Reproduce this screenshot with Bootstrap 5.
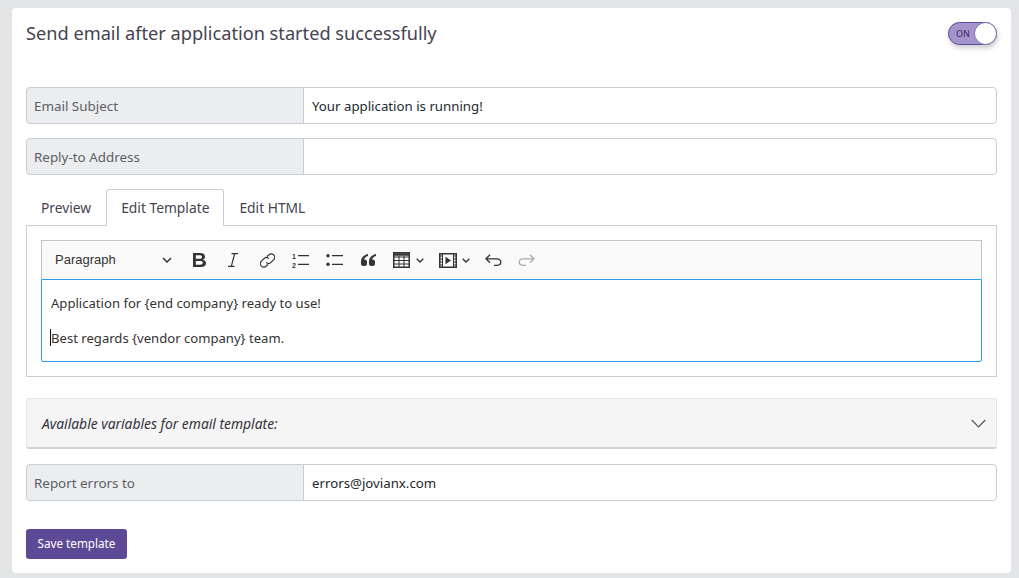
<!DOCTYPE html>
<html lang="en">
<head>
    <meta charset="UTF-8">
    <meta name="viewport" content="width=device-width, initial-scale=1.0">
    <title>Email Template</title>
    <link href="https://cdn.jsdelivr.net/npm/bootstrap@5.3.0/dist/css/bootstrap.min.css" rel="stylesheet">
    <style>
        html, body { height: 578px; overflow: hidden; }
        body {
            background: #e4e5e6;
            font-family: "Noto Sans", sans-serif;
            font-size: 13.3px;
            color: #212529;
            padding: 8px 8px 0 12px;
        }
        .panel {
            height: 565px;
            background: #fff;
            border: 0;
            border-radius: 4px;
            padding: 12px 14px 0;
        }
        .panel-title { font-size: 18.2px; font-weight: 400; color: #45434f; line-height: 26px; margin: 0; }
        .panel-head { height: 67px; }
        .switch-box {
            width: 49px; height: 23px; margin: 2px 0 0; border: 1px solid #5c4a97;
            border-radius: 12px; background: #a594cc; position: relative;
            box-shadow: 1px 3px 5px rgba(0,0,0,.2);
            font-size: 9px; line-height: 21px; color: #2f2a6a; padding-left: 7px;
        }
        .switch-knob {
            position: absolute; right: -1px; top: -1px; width: 23px; height: 23px;
            background: #fff; border: 1px solid #7f6fb0; border-radius: 50%;
        }
        .field-row { height: 37px; margin-bottom: 14px; flex-wrap: nowrap; }
        .field-row .input-group-text {
            width: 278px; font-size: 13.4px; color: #5c5f66; background: #ecedef;
            border-color: #c8ced3; padding: 1px 7px 0; border-radius: 4px 0 0 4px;
        }
        .field-row .form-control {
            font-size: 13.25px; color: #23282c; border-color: #c8ced3; padding: 0 8px; height: 37px;
            border-radius: 0 4px 4px 0;
        }
        .nav-tabs { border-bottom: 0; height: 37px; margin-bottom: -1px; position: relative; z-index: 1; }
        .nav-tabs .nav-link {
            font-size: 13.8px; color: #45434f; padding: 0 14px; height: 37px; line-height: 36px;
            border-radius: 3px 3px 0 0; border: 1px solid transparent; margin: 0;
        }
        .nav-tabs .nav-link.active { border-color: #c8ced3 #c8ced3 #fff; color: #45434f; }
        .tab-box { border: 1px solid #c8ced3; height: 152px; padding: 14px; }
        .editor-bar {
            height: 39px; background: #fafafa; border: 1px solid #c4c4c4; border-bottom: 0;
            padding-left: 13px; color: #333;
        }
        .style-pick { font-family: "Liberation Sans", sans-serif; font-size: 13px; width: 117px; color: #333; }
        .tool-icon { display: block; flex: none; }
        .gap-5px { margin-left: 5px; }
        .gap-6px { margin-left: 6px; }
        .gap-15px { margin-left: 15px; }
        .gap-16px { margin-left: 16px; }
        .gap-17px { margin-left: 17px; }
        .gap-18px { margin-left: 18px; }
        .gap-21px { margin-left: 21px; }
        .gap-22px { margin-left: 22px; }
        .num-mark { font-family: "Liberation Sans", sans-serif; font-size: 7px; font-weight: 700; fill: #333; }
        .editor-text {
            height: 83px; border: 1px solid #2f9fe8; border-radius: 0 0 2px 2px;
            padding: 14px 9px 0; font-size: 13.1px; color: #333;
            line-height: 18px; position: relative; background: #fff;
        }
        .editor-text p { margin: 0 0 17px; }
        .caret-mark { position: absolute; left: 8px; top: 49px; width: 1px; height: 17px; background: #111; }
        .vars-box {
            margin-top: 21px; height: 51px; background: #f5f5f5; border: 1px solid #e4e6e8;
            border-bottom: 2px solid #cfd4d8; border-radius: 3px; padding: 0 10px 0 15px;
            font-size: 13.85px; font-style: italic; color: #33323c;
        }
        .vars-label { padding-top: 2px; }
        .field-row.last-row { margin-top: 15px; margin-bottom: 28px; }
        .btn-save {
            width: 101px; height: 30px; padding: 0; background: #5c4a97; border: 0; color: #fff;
            font-size: 11.7px; border-radius: 3px;
        }
        .btn-save:hover { background: #4d3e80; color: #fff; }
    </style>
</head>
<body>
    <div class="panel">
        <!-- Heading and on/off switch -->
        <div class="panel-head d-flex justify-content-between align-items-start">
            <h5 class="panel-title">Send email after application started successfully</h5>
            <div class="switch-box">ON<span class="switch-knob"></span></div>
        </div>

        <div class="input-group field-row">
            <span class="input-group-text">Email Subject</span>
            <input type="text" class="form-control" value="Your application is running!">
        </div>
        <div class="input-group field-row">
            <span class="input-group-text">Reply-to Address</span>
            <input type="text" class="form-control">
        </div>

        <ul class="nav nav-tabs">
            <li class="nav-item"><a class="nav-link" href="#">Preview</a></li>
            <li class="nav-item"><a class="nav-link active" href="#">Edit Template</a></li>
            <li class="nav-item"><a class="nav-link" href="#">Edit HTML</a></li>
        </ul>
        <div class="tab-box">
            <!-- Editor toolbar -->
            <div class="editor-bar d-flex align-items-center">
                <div class="style-pick d-flex align-items-center justify-content-between">
                    <span>Paragraph</span>
                    <svg class="tool-icon" width="10" height="6" viewBox="0 0 10 6" fill="none" stroke="#333" stroke-width="1.5"><path d="M1 1l4 4 4-4"/></svg>
                </div>
                <svg class="tool-icon gap-21px" width="13" height="14" viewBox="0 0 13 14" fill="#333" fill-rule="evenodd"><path d="M0 0h7.200c3 0 4.800 1.400 4.800 3.700 0 1.500-.9 2.600-2.200 3 1.700.3 3.200 1.500 3.200 3.500 0 2.500-2 3.800-5 3.800H0zM2.800 2.300v3.500h3.900c1.500 0 2.300-.7 2.300-1.800s-.8-1.700-2.300-1.700zM2.800 8v3.700h4.400c1.600 0 2.600-.7 2.600-1.900S8.800 8 7.200 8z"/></svg>
                <svg class="tool-icon gap-22px" width="10" height="14" viewBox="0 0 10 14" fill="none" stroke="#333" stroke-width="1.200"><path d="M3.500.6H10M0 13.400h6.500M6.700.6L3.300 13.400"/></svg>
                <svg class="tool-icon gap-22px" width="15" height="15" viewBox="0 0 15 15" fill="none" stroke="#333" stroke-width="1.200"><path d="M7 3.500L9 1.800a3.400 3.400 0 0 1 4.800 4.800L11 9.400a3.400 3.400 0 0 1-4.800 0"/><path d="M8 11.500L6 13.200a3.400 3.400 0 0 1-4.800-4.800L4 5.600a3.400 3.400 0 0 1 4.800 0"/></svg>
                <svg class="tool-icon gap-17px" width="17" height="15" viewBox="0 0 17 15"><text class="num-mark" x="0" y="6">1</text><text class="num-mark" x="0" y="15">2</text><path d="M6 2.700h11M6 11.300h11" stroke="#333" stroke-width="1.300"/></svg>
                <svg class="tool-icon gap-17px" width="17" height="12" viewBox="0 0 17 12"><circle cx="2" cy="1.700" r="1.700" fill="#333"/><circle cx="2" cy="10.300" r="1.700" fill="#333"/><path d="M6 1.700h11M6 10.300h11" stroke="#333" stroke-width="1.300"/></svg>
                <svg class="tool-icon gap-18px" width="15" height="12" viewBox="0 0 15 12" fill="#333"><path d="M7 0C3 1 .3 3.500 0 7v2.500A2.500 2.500 0 0 0 2.500 12h1A2.500 2.500 0 0 0 6 9.500V8a2.500 2.500 0 0 0-2.500-2.500H3C3.300 4 4.800 2.500 7 2zM15 0c-4 1-6.700 3.500-7 7v2.500a2.500 2.500 0 0 0 2.500 2.500h1A2.500 2.500 0 0 0 14 9.500V8a2.500 2.500 0 0 0-2.500-2.500H11c.3-1.500 1.800-3 4-3.500z"/></svg>
                <svg class="tool-icon gap-17px" width="17" height="16" viewBox="0 0 17 16" fill="none" stroke="#333"><rect x=".75" y=".75" width="15.500" height="14.500" stroke-width="1.500"/><path d="M1 5h15M1 8.500h15M1 12h15M6 4v11M11 4v11" stroke-width="1"/><path d="M1 2.500h15" stroke-width="2.500"/></svg>
                <svg class="tool-icon gap-6px" width="8" height="5" viewBox="0 0 8 5" fill="none" stroke="#333" stroke-width="1.300"><path d="M.7.7L4 4 7.300.7"/></svg>
                <svg class="tool-icon gap-15px" width="18" height="15" viewBox="0 0 18 15" fill="none" stroke="#333"><rect x=".75" y=".75" width="16.500" height="13.500" stroke-width="1.500"/><path d="M3.500 1v13M14.500 1v13" stroke-width="1"/><path d="M1 3h2.500M1 6h2.500M1 9h2.500M1 12h2.500M14.500 3H17M14.500 6H17M14.500 9H17M14.500 12H17" stroke-width="1"/><path d="M6.500 3.800l5.500 3.700-5.500 3.700z" fill="#333" stroke="none"/></svg>
                <svg class="tool-icon gap-5px" width="8" height="5" viewBox="0 0 8 5" fill="none" stroke="#333" stroke-width="1.300"><path d="M.7.7L4 4 7.300.7"/></svg>
                <svg class="tool-icon gap-15px" width="17" height="12" viewBox="0 0 17 12" fill="none" stroke="#333" stroke-width="1.300"><path d="M5 .8L1 4.800l4 4M1 4.800h11c2 0 3.800 1.400 3.800 3.300S14 11.300 12 11.300H9"/></svg>
                <svg class="tool-icon gap-16px" width="17" height="12" viewBox="0 0 17 12" fill="none" stroke="#aaa" stroke-width="1.300"><path d="M12 .8l4 4-4 4M16 4.800H5C3 4.800 1.200 6.200 1.200 8.100S3 11.300 5 11.300h3"/></svg>
            </div>
            <div class="editor-text">
                <p>Application for {end company} ready to use!</p>
                <p>Best regards {vendor company} team.</p>
                <span class="caret-mark"></span>
            </div>
        </div>

        <!-- Collapsed variables list -->
        <div class="vars-box d-flex align-items-center justify-content-between">
            <span class="vars-label">Available variables for email template:</span>
            <svg class="tool-icon" width="15" height="9" viewBox="0 0 15 9" fill="none" stroke="#555" stroke-width="1.200"><path d="M.7 1l6.800 6.800L14.300 1"/></svg>
        </div>

        <div class="input-group field-row last-row">
            <span class="input-group-text">Report errors to</span>
            <input type="text" class="form-control" value="errors@jovianx.com">
        </div>

        <button type="button" class="btn btn-save">Save template</button>
    </div>
    <script src="https://cdn.jsdelivr.net/npm/bootstrap@5.3.0/dist/js/bootstrap.bundle.min.js"></script>
</body>
</html>
